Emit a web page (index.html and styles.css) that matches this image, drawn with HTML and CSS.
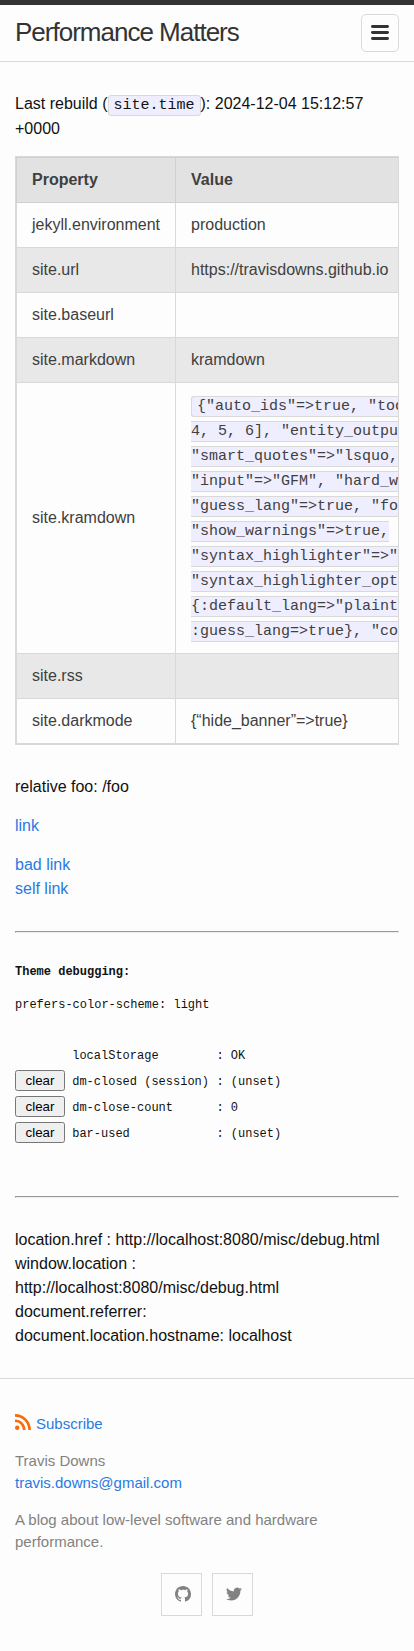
FILE: index.html
```html
<!DOCTYPE html>
<html lang="en">
<head>
<meta charset="utf-8">
<title>Performance Matters</title>
<link rel="stylesheet" href="styles.css">
</head>
<body>
<header class="site-header">
  <a class="site-title" href="#">Performance Matters</a>
  <nav class="site-nav" aria-label="Menu">
    <svg viewBox="0 0 18 15" width="18" height="15"><path fill="#333" d="M18 1.484c0 .82-.665 1.484-1.484 1.484H1.484A1.484 1.484 0 0 1 0 1.484C0 .665.665 0 1.484 0h15.032C17.335 0 18 .665 18 1.484zM18 7.516C18 8.335 17.335 9 16.516 9H1.484a1.484 1.484 0 0 1 0-2.968h15.032c.82 0 1.484.664 1.484 1.484zM18 13.516c0 .82-.665 1.484-1.484 1.484H1.484a1.484 1.484 0 0 1 0-2.968h15.032c.82 0 1.484.664 1.484 1.484z"/></svg>
  </nav>
</header>
<main class="page-content">
  <p>Last rebuild (<code>site.time</code>): 2024-12-04 15:12:57 +0000</p>
  <div class="table-wrap">
    <table>
      <thead><tr><th>Property</th><th>Value</th></tr></thead>
      <tbody>
        <tr><td>jekyll.environment</td><td>production</td></tr>
        <tr><td>site.url</td><td>https://travisdowns.github.io</td></tr>
        <tr><td>site.baseurl</td><td></td></tr>
        <tr><td>site.markdown</td><td>kramdown</td></tr>
        <tr><td>site.kramdown</td><td class="options"><code>{"auto_ids"=&gt;true, "toc<br>4, 5, 6], "entity_output<br>"smart_quotes"=&gt;"lsquo,r<br>"input"=&gt;"GFM", "hard_wr<br>"guess_lang"=&gt;true, "foo<br>"show_warnings"=&gt;true,<br>"syntax_highlighter"=&gt;"r<br>"syntax_highlighter_opts<br>{:default_lang=&gt;"plainte<br>:guess_lang=&gt;true}, "col</code></td></tr>
        <tr><td>site.rss</td><td></td></tr>
        <tr><td>site.darkmode</td><td>{“hide_banner”=&gt;true}</td></tr>
      </tbody>
    </table>
  </div>
  <p>relative foo: /foo</p>
  <p><a href="#">link</a></p>
  <p><a href="#">bad link</a><br><a href="#">self link</a></p>
  <hr>
  <section class="debug">
    <p><b>Theme debugging:</b></p>
    <p>prefers-color-scheme: light</p>
    <div class="storage">
      <span></span><span>localStorage</span><span>: OK</span>
      <button>clear</button><span>dm-closed (session)</span><span>: (unset)</span>
      <button>clear</button><span>dm-close-count</span><span>: 0</span>
      <button>clear</button><span>bar-used</span><span>: (unset)</span>
    </div>
  </section>
  <hr>
  <div>location.href : http://localhost:8080/misc/debug.html<br>window.location : http://localhost:8080/misc/debug.html<br>document.referrer:<br>document.location.hostname: localhost</div>
</main>
<footer class="site-footer">
  <p class="subscribe"><svg viewBox="0 0 16 16" width="16" height="16"><path fill="#f76b0a" d="M0 0v2.700c7.300 0 13.300 5.900 13.300 13.300H16C16 7.200 8.800 0 0 0zM0 5.400v2.700c4.300 0 7.800 3.500 7.800 7.900h2.800c0-5.800-4.700-10.600-10.600-10.600zM2.200 11.600a2.200 2.200 0 1 0 0 4.400 2.200 2.200 0 0 0 0-4.400z"/></svg><a href="#">Subscribe</a></p>
  <p>Travis Downs<br><a href="#">travis.downs@gmail.com</a></p>
  <p>A blog about low-level software and hardware performance.</p>
  <div class="social">
    <a href="#" aria-label="GitHub"><svg viewBox="0 0 16 16" width="16" height="16"><path d="M8 0C3.580 0 0 3.582 0 8c0 3.535 2.292 6.533 5.470 7.590.4.075.547-.172.547-.385 0-.190-.007-.693-.010-1.360-2.226.483-2.695-1.073-2.695-1.073-.364-.924-.889-1.170-.889-1.170-.726-.496.055-.486.055-.486.803.056 1.225.824 1.225.824.714 1.223 1.873.870 2.330.665.072-.517.278-.870.507-1.070-1.777-.200-3.644-.888-3.644-3.953 0-.873.310-1.587.823-2.147-.090-.202-.360-1.015.070-2.117 0 0 .670-.215 2.200.820A7.670 7.670 0 0 1 8 3.868c.680.003 1.365.092 2.004.270 1.527-1.035 2.198-.820 2.198-.820.436 1.102.162 1.915.080 2.117.513.560.822 1.274.822 2.147 0 3.073-1.870 3.750-3.653 3.947.287.246.543.735.543 1.480 0 1.070-.010 1.933-.010 2.195 0 .215.144.463.550.385A8 8 0 0 0 16 8c0-4.418-3.582-8-8-8z"/></svg></a>
    <a href="#" aria-label="Twitter"><svg viewBox="0 0 16 16" width="16" height="16"><path d="M15.970 3.058a6.530 6.530 0 0 1-1.880.516 3.300 3.300 0 0 0 1.440-1.816c-.634.370-1.337.640-2.085.790A3.280 3.280 0 0 0 7.860 5.540C5.130 5.410 2.710 4.100 1.090 2.110a3.290 3.290 0 0 0 1.016 4.382 3.320 3.320 0 0 1-1.486-.410v.040a3.290 3.290 0 0 0 2.633 3.220 3.330 3.330 0 0 1-1.480.056 3.290 3.290 0 0 0 3.067 2.280A6.590 6.590 0 0 1 0 13.040a9.320 9.320 0 0 0 5.032 1.474c6.038 0 9.340-5 9.340-9.338 0-.143-.004-.284-.010-.425a6.670 6.670 0 0 0 1.608-1.693z"/></svg></a>
  </div>
</footer>
</body>
</html>
```

FILE: styles.css
```css
* { box-sizing: border-box; }
body { margin: 0; background: #fdfdfd; color: #111; font: 16px/1.5 "Liberation Sans", Arial, sans-serif; }
p { margin: 0 0 15px; }
a { color: #2a7ae2; text-decoration: none; }

.site-header { display: flex; justify-content: space-between; align-items: flex-start; height: 62px; padding: 0 15px; border-top: 5px solid #333; border-bottom: 1px solid #d9d9d9; }
.site-title { color: #333; font-size: 26px; line-height: 54px; letter-spacing: -1px; }
.site-nav { display: flex; justify-content: center; width: 38px; height: 38px; margin-top: 9px; padding-top: 10px; border: 1px solid #d9d9d9; border-radius: 5px; }

.page-content { padding: 30px 15px; }
code { padding: 1px 5px; border: 1px solid #d9d9d9; border-radius: 3px; background: #eef; font: 15px/22px "Liberation Mono", monospace; }

.table-wrap { overflow: hidden; margin-bottom: 30px; border: 1px solid #d9d9d9; }
table { width: 500px; border-collapse: collapse; table-layout: fixed; color: #404040; text-align: left; }
th, td { height: 45px; padding: 10px 15px; border: 1px solid #d9d9d9; }
th { background: #e2e2e2; border-color: #d0d0d0; }
th:first-child { width: 159px; }
tbody tr:nth-child(even) { background: #e8e8e8; }
.options { white-space: nowrap; }

hr { height: 2px; margin: 30px 0; border: 1px solid #999; border-right-color: #eee; border-bottom-color: #eee; }
.debug { font: 12px/18px "Liberation Mono", monospace; }
.storage { display: grid; grid-template-columns: 50px 137px 1fr; grid-auto-rows: 26px; column-gap: 7.2px; align-items: center; margin-top: 29px; padding-bottom: 19px; white-space: nowrap; }
.storage button { height: 21px; margin: 0 0 3px; padding: 1px 6px; font: 13.333px "Liberation Sans", Arial, sans-serif; }

.site-footer { padding: 34px 15px 35px; border-top: 1px solid #d9d9d9; color: #828282; font-size: 15px; line-height: 22px; }
.subscribe { display: flex; align-items: center; gap: 5px; }
.subscribe svg { margin-bottom: 4px; }
.social { display: flex; justify-content: center; gap: 10px; margin-top: 20px; }
.social a { display: flex; align-items: center; justify-content: center; width: 41px; height: 43px; padding: 0 0 1px 2px; border: 1px solid #d9d9d9; }
.social svg { fill: #828282; }
```
